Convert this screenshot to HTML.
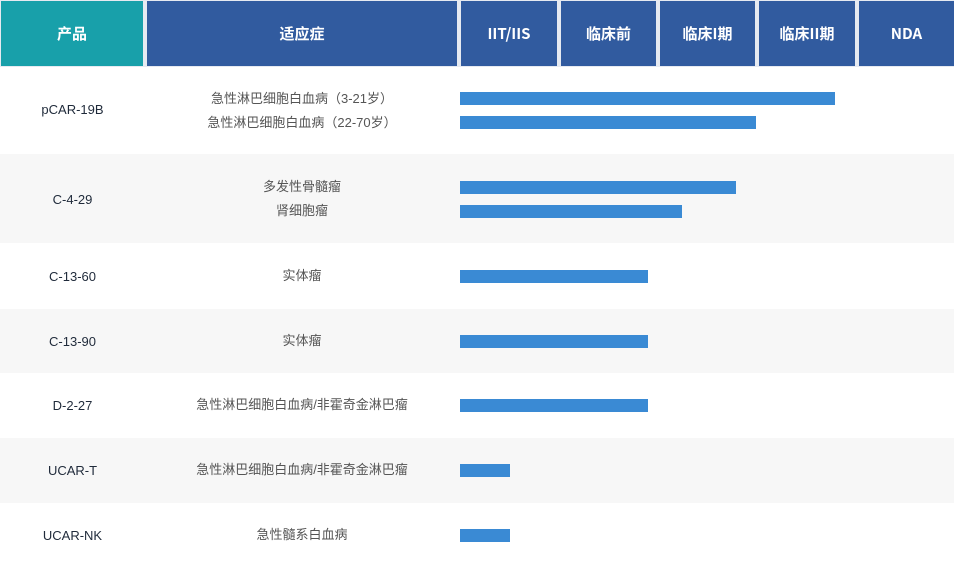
<!DOCTYPE html>
<html><head><meta charset="utf-8"><style>
body{margin:0;width:954px;height:582px;background:#fff;position:relative;overflow:hidden;font-family:"Liberation Sans","Noto Sans CJK SC",sans-serif}
.h{position:absolute;top:1px;height:65px;background:#315b9f;color:#fff;font-weight:bold;font-size:15px;display:flex;align-items:center;justify-content:center;font-family:"Noto Sans CJK SC",sans-serif;line-height:20px}
.r{position:absolute;left:0;width:954px}
.p{position:absolute;left:0;width:145px;text-align:center;font-size:13px;color:#1f2a3a}
.i{position:absolute;left:147px;width:310px;text-align:center;font-size:13px;color:#555;line-height:24px}
.b{position:absolute;left:460px;height:13px;background:#3a8ad4}
</style></head><body>
<div style="position:absolute;left:0;top:0;width:954px;height:67px;background:#e6eaf1"></div>
<div class="h" style="left:1px;width:142px;background:#18a0aa">产品</div>
<div class="h" style="left:147px;width:310px">适应症</div>
<div class="h" style="left:461px;width:96px">IIT/IIS</div>
<div class="h" style="left:561px;width:95px">临床前</div>
<div class="h" style="left:660px;width:95px">临床I期</div>
<div class="h" style="left:759px;width:96px">临床II期</div>
<div class="h" style="left:859px;width:95px">NDA</div>

<div class="r" style="top:67px;height:87px;background:#fff"></div>
<div class="r" style="top:154px;height:89px;background:#f7f7f7"></div>
<div class="r" style="top:309px;height:64px;background:#f7f7f7"></div>
<div class="r" style="top:438px;height:65px;background:#f7f7f7"></div>

<div class="p" style="top:102px">pCAR-19B</div>
<div class="i" style="top:87px">急性淋巴细胞白血病（3-21岁）<br>急性淋巴细胞白血病（22-70岁）</div>
<div class="b" style="top:92px;width:375px"></div>
<div class="b" style="top:116px;width:296px"></div>

<div class="p" style="top:192px">C-4-29</div>
<div class="i" style="top:175px">多发性骨髓瘤<br>肾细胞瘤</div>
<div class="b" style="top:181px;width:276px"></div>
<div class="b" style="top:205px;width:222px"></div>

<div class="p" style="top:269px">C-13-60</div>
<div class="i" style="top:264px">实体瘤</div>
<div class="b" style="top:270px;width:188px"></div>

<div class="p" style="top:334px">C-13-90</div>
<div class="i" style="top:329px">实体瘤</div>
<div class="b" style="top:335px;width:188px"></div>

<div class="p" style="top:398px">D-2-27</div>
<div class="i" style="top:393px">急性淋巴细胞白血病/非霍奇金淋巴瘤</div>
<div class="b" style="top:399px;width:188px"></div>

<div class="p" style="top:463px">UCAR-T</div>
<div class="i" style="top:458px">急性淋巴细胞白血病/非霍奇金淋巴瘤</div>
<div class="b" style="top:464px;width:50px"></div>

<div class="p" style="top:528px">UCAR-NK</div>
<div class="i" style="top:523px">急性髓系白血病</div>
<div class="b" style="top:529px;width:50px"></div>
</body></html>
